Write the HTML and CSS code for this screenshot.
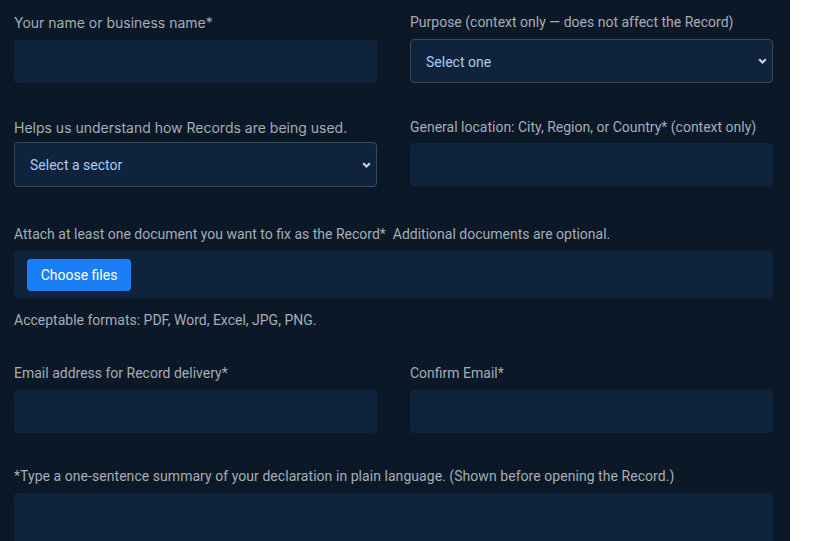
FILE: index.html
```html
<!DOCTYPE html>
<html lang="en">
<head>
<meta charset="utf-8">
<title>Record form</title>
<link rel="stylesheet" href="styles.css">
</head>
<body>
<main class="page">
  <form class="form">
    <div class="row row-first">
      <div class="field">
        <label class="label label-alt">Your name or business name*</label>
        <div class="input"></div>
      </div>
      <div class="field">
        <label class="label label-tight">Purpose (context only — does not affect the Record)</label>
        <div class="select select-1">
          <span>Select one</span>
          <svg class="chev" width="9" height="6" viewBox="0 0 9 6"><path d="M1.2 1.2 L4.5 4.5 L7.8 1.2" fill="none" stroke="#cfd6de" stroke-width="2"/></svg>
        </div>
      </div>
    </div>
    <div class="row row-second">
      <div class="field">
        <label class="label label-alt label-s">Helps us understand how Records are being used.</label>
        <div class="select select-2">
          <span>Select a sector</span>
          <svg class="chev" width="9" height="6" viewBox="0 0 9 6"><path d="M1.2 1.2 L4.5 4.5 L7.8 1.2" fill="none" stroke="#cfd6de" stroke-width="2"/></svg>
        </div>
      </div>
      <div class="field">
        <label class="label label-m">General location: City, Region, or Country* (context only)</label>
        <div class="input"></div>
      </div>
    </div>
    <div class="block block-attach">
      <label class="label label-tight">Attach at least one document you want to fix as the Record*&nbsp; Additional documents are optional.</label>
      <div class="filebox"><span class="btn">Choose files</span></div>
      <p class="hint">Acceptable formats: PDF, Word, Excel, JPG, PNG.</p>
    </div>
    <div class="row row-email">
      <div class="field">
        <label class="label label-tight">Email address for Record delivery*</label>
        <div class="input"></div>
      </div>
      <div class="field">
        <label class="label label-tight">Confirm Email*</label>
        <div class="input"></div>
      </div>
    </div>
    <div class="block block-summary">
      <label class="label label-tight label-summary">*Type a one-sentence summary of your declaration in plain language. (Shown before opening the Record.)</label>
      <div class="textarea"></div>
    </div>
  </form>
</main>
</body>
</html>
```

FILE: styles.css
```css
html, body {
  margin: 0;
  padding: 0;
  background: #ffffff;
}
.page {
  width: 790px;
  height: 541px;
  overflow: hidden;
  background: #0b1828;
  box-sizing: border-box;
  padding: 12px 17px 0 14px;
  font-family: Roboto, "Noto Sans", sans-serif;
  font-size: 14px;
}
.form {
  display: flex;
  flex-direction: column;
}
.row {
  display: grid;
  grid-template-columns: 363px 363px;
  column-gap: 33px;
  align-items: start;
}
.row-second { margin-top: 34px; }
.block-attach { margin-top: 37px; }
.row-email { margin-top: 33px; }
.block-summary { margin-top: 33px; }
.field {
  display: flex;
  flex-direction: column;
}
.label {
  display: block;
  color: #a6adb5;
  line-height: 21px;
  height: 20px;
  margin-bottom: 8px;
  white-space: nowrap;
}
.label-alt {
  font-family: Inter, "Noto Sans", sans-serif;
}
.label-summary {
  letter-spacing: 0.05px;
}
.label-tight { margin-bottom: 7px; }
.label-s { margin-bottom: 5px; }
.label-m { margin-bottom: 6px; }
.input {
  height: 43px;
  background: #0f233c;
  border-radius: 4px;
}
.select {
  position: relative;
  box-sizing: border-box;
  background: #0f233c;
  border: 1px solid #3b4858;
  border-radius: 4px;
  display: flex;
  align-items: center;
  padding-left: 15px;
  padding-top: 1px;
  color: #a9cbf5;
}
.select-1 { height: 44px; }
.select-2 { height: 45px; }
.chev {
  position: absolute;
  right: 5px;
  top: 50%;
  margin-top: -3px;
}
.filebox {
  height: 47px;
  background: #0f233c;
  border-radius: 4px;
  box-sizing: border-box;
  padding: 8px 13px;
}
.btn {
  display: inline-flex;
  align-items: center;
  justify-content: center;
  height: 32px;
  width: 104px;
  background: #1a7ff4;
  color: #ffffff;
  border-radius: 4px;
}
.hint {
  margin: 12px 0 0;
  color: #a6adb5;
  line-height: 21px;
  height: 20px;
}
.textarea {
  height: 100px;
  background: #0f233c;
  border-radius: 4px;
}
```
